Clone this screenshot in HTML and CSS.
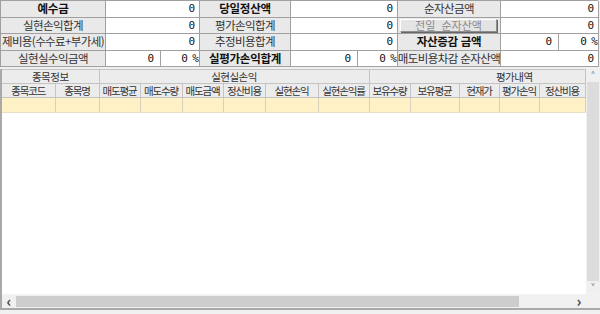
FILE: index.html
```html
<!DOCTYPE html>
<html lang="ko">
<head>
<meta charset="UTF-8">
<title>실현손익</title>
<link rel="stylesheet" href="styles.css">
</head>
<body>

<div class="summary">
  <div class="label bold"><span>예수금</span></div>
  <div class="value">0</div>
  <div class="label bold"><span>당일정산액</span></div>
  <div class="value">0</div>
  <div class="label"><span>순자산금액</span></div>
  <div class="value">0</div>

  <div class="label"><span>실현손익합계</span></div>
  <div class="value">0</div>
  <div class="label"><span>평가손익합계</span></div>
  <div class="value">0</div>
  <div class="label btn-cell"><button class="btn">전일 순자산액</button></div>
  <div class="value">0</div>

  <div class="label"><span>제비용(수수료+부가세)</span></div>
  <div class="value">0</div>
  <div class="label"><span>추정비용합계</span></div>
  <div class="value">0</div>
  <div class="label bold"><span>자산증감 금액</span></div>
  <div class="split">
    <div class="value amt r3">0</div>
    <div class="value pct">0 %</div>
  </div>

  <div class="label"><span>실현실수익금액</span></div>
  <div class="split">
    <div class="value amt r1">0</div>
    <div class="value pct">0 %</div>
  </div>
  <div class="label bold"><span>실평가손익합계</span></div>
  <div class="split">
    <div class="value amt r2">0</div>
    <div class="value pct">0 %</div>
  </div>
  <div class="label"><span>매도비용차감 순자산액</span></div>
  <div class="value">0</div>
</div>

<div class="grid">
  <div class="grid-main">
    <div class="grid-view">
      <table class="sheet">
        <colgroup>
          <col style="width:53px"><col style="width:44px">
          <col style="width:41px"><col style="width:42px"><col style="width:41px">
          <col style="width:42px"><col style="width:53px"><col style="width:51px">
          <col style="width:41px"><col style="width:49px"><col style="width:40px">
          <col style="width:40px"><col style="width:46px">
        </colgroup>
        <tr class="group">
          <th colspan="2">종목정보</th>
          <th colspan="6">실현실손익</th>
          <th colspan="5" class="eval">평가내역</th>
        </tr>
        <tr class="cols">
          <th>종목코드</th><th>종목명</th>
          <th>매도평균</th><th>매도수량</th><th>매도금액</th>
          <th>정산비용</th><th>실현손익</th><th>실현손익률</th>
          <th>보유수량</th><th>보유평균</th><th>현재가</th>
          <th>평가손익</th><th>정산비용</th>
        </tr>
        <tr class="row">
          <td></td><td></td><td></td><td></td><td></td><td></td><td></td>
          <td></td><td></td><td></td><td></td><td></td><td></td>
        </tr>
      </table>
    </div>
    <div class="vscroll">
      <div class="arrow">&#x2C4;</div>
      <div class="track"></div>
      <div class="arrow">&#x2C5;</div>
    </div>
  </div>
  <div class="hscroll">
    <div class="arrow">&lsaquo;</div>
    <div class="htrack"><div class="thumb"></div></div>
    <div class="arrow">&rsaquo;</div>
    <div class="corner"></div>
  </div>
</div>

</body>
</html>
```

FILE: styles.css
```css
body {
  margin: 0;
  width: 600px;
  height: 314px;
  overflow: hidden;
  background-color: #f0f0f0;
  font-family: "Noto Sans CJK KR", "Noto Sans", sans-serif;
  font-size: 11px;
  color: #222;
}

.summary {
  display: grid;
  grid-template-columns: 105px 94px 91px 107px 103px 98px;
  grid-template-rows: 17px 16px 17px 16px;
  border-top: 1px solid #a0a0a0;
  border-left: 1px solid #a0a0a0;
  background: #fff;
  width: 598px;
  box-sizing: border-box;
}

.label,
.value {
  border-right: 1px solid #a0a0a0;
  border-bottom: 1px solid #a0a0a0;
  box-sizing: border-box;
  line-height: 15px;
  white-space: nowrap;
  overflow: hidden;
}

.label {
  display: flex;
  justify-content: center;
  background-color: #e9e9e9;
  color: #333;
  font-size: 11.5px;
  letter-spacing: -0.6px;
}

.label span {
  flex-shrink: 0;
}

.label.bold {
  font-weight: bold;
  color: #111;
  letter-spacing: -0.3px;
}

.value {
  background: #fff;
  text-align: right;
  padding-right: 4px;
  font-family: "DejaVu Sans Mono", monospace;
  font-size: 11px;
  color: #111;
}

.split {
  display: flex;
}

.split .amt {
  padding-right: 6px;
}

.split .r1 {
  width: 55px;
}

.split .r2 {
  width: 67px;
}

.split .r3 {
  width: 58px;
}

.split .pct {
  flex: 1;
  padding-right: 1px;
  letter-spacing: -1px;
}

.btn-cell {
  padding: 1px 3px 1px 2px;
}

.btn {
  width: 100%;
  height: 13px;
  margin: 0;
  padding: 0;
  border: 1px solid #8e8e8e;
  border-top-color: #fff;
  border-left-color: #fff;
  box-shadow: 1px 1px 0 #666;
  background: #e4e4e4;
  font-family: inherit;
  font-size: 11px;
  line-height: 11px;
  letter-spacing: 0;
  word-spacing: 3px;
  color: #8a8a8a;
}

.grid {
  margin-top: 2px;
  width: 600px;
  height: 241px;
  border-left: 2px solid #a9a9a9;
  border-bottom: 2px solid #a9a9a9;
  box-sizing: border-box;
  display: flex;
  flex-direction: column;
  background: #fff;
}

.grid-main {
  flex: 1;
  display: flex;
  min-height: 0;
}

.grid-view {
  flex: 1;
  overflow: hidden;
  background: #fff;
}

.sheet {
  border-collapse: collapse;
  table-layout: fixed;
  width: 583px;
}

.sheet th {
  height: 13px;
  padding: 0;
  background-color: #ececec;
  border-right: 1px solid #c4c4c4;
  border-bottom: 1px solid #c4c4c4;
  font-weight: normal;
  font-size: 10.5px;
  color: #333;
  white-space: nowrap;
  overflow: hidden;
  letter-spacing: -1.1px;
  line-height: 13px;
}

.sheet .group th {
  border-top: 1px solid #c4c4c4;
  letter-spacing: -0.5px;
}

.sheet .group th.eval {
  text-align: right;
  padding-right: 52px;
}

.sheet td {
  height: 14px;
  padding: 0;
  background-color: #fff1c6;
  border-right: 1px solid #d6d0bc;
  border-bottom: 1px solid #e6dfc6;
}

.vscroll {
  width: 14px;
  display: flex;
  flex-direction: column;
  background: #f0f0f0;
}

.vscroll .track {
  flex: 1;
  background: #dcdcdc;
  margin: 0 1px;
}

.arrow {
  height: 13px;
  line-height: 13px;
  text-align: center;
  font-size: 12px;
  color: #444;
  background: #f0f0f0;
}

.hscroll {
  height: 13px;
  display: flex;
  background: #f0f0f0;
  border-top: 1px solid #f4f4f4;
}

.hscroll .arrow {
  width: 14px;
  font-size: 15px;
  font-weight: bold;
  line-height: 12px;
}

.htrack {
  flex: 1;
  background: #f0f0f0;
  padding: 1px 0;
}

.thumb {
  width: 503px;
  height: 11px;
  background: #cdcdcd;
}

.corner {
  width: 14px;
  background: #f0f0f0;
}
```
